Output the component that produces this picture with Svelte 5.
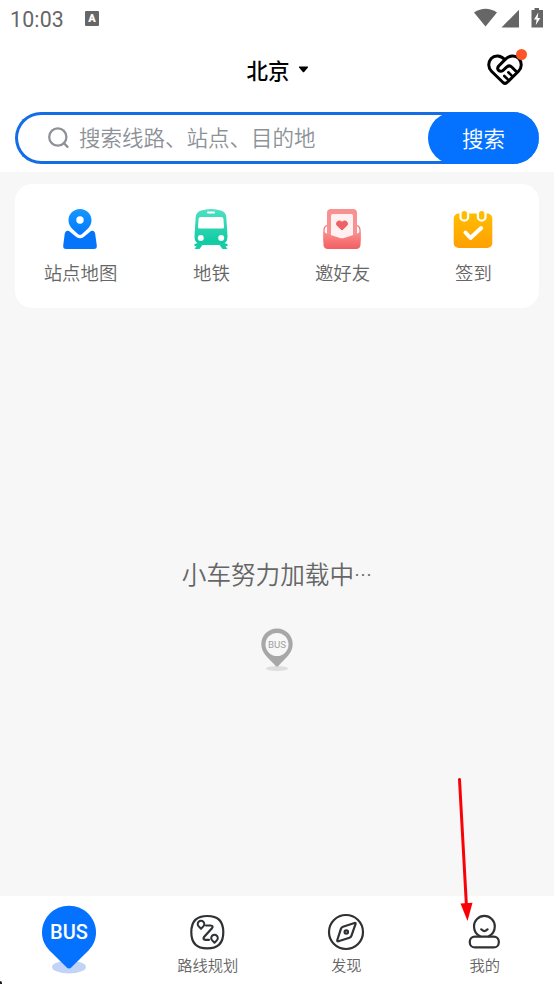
<script lang="ts">
	let city = '北京';
	let query = '';
	let activeTab = 'bus';

	const shortcuts = [
		{ id: 'map', label: '站点地图' },
		{ id: 'metro', label: '地铁' },
		{ id: 'invite', label: '邀好友' },
		{ id: 'checkin', label: '签到' }
	];

	const tabs = [
		{ id: 'bus', label: 'BUS' },
		{ id: 'route', label: '路线规划' },
		{ id: 'discover', label: '发现' },
		{ id: 'mine', label: '我的' }
	];
</script>

<div class="screen">
	<header>
		<div class="status-bar">
			<span class="clock">10:03</span>
			<span class="input-badge">A</span>
			<svg class="status-icons" width="72" height="22" viewBox="0 0 72 22" fill="#666" aria-hidden="true">
				<path d="M1 4.500Q12.500 -3 24 4.500L12.500 18.500Z" />
				<path d="M46 1.700V19.500H28.500Z" />
				<path d="M61.500 0h4.500v2h4v17.500H58.500V2h3Z" />
				<path d="M65.300 4.500l-4.300 7h2.600l-.8 5.500 4.500-7h-2.600Z" fill="#fff" />
			</svg>
		</div>

		<div class="title-bar">
			<button type="button" class="city">
				{city}
				<svg width="11" height="7" viewBox="0 0 11 7" aria-hidden="true">
					<path d="M1.500.5h8q1 0 .4.9L6.200 5.900q-.7.7-1.400 0L1.100 1.400Q.5.500 1.500.5Z" />
				</svg>
			</button>
			<button type="button" class="care" aria-label="关怀">
				<svg width="40" height="40" viewBox="0 0 40 40" fill="none" stroke="#000" stroke-width="3" stroke-linecap="round" stroke-linejoin="round">
					<path d="M20 11.600C15.500 6.800 9.500 7 6.200 10.500C2.800 14.300 3 19.800 6.500 23.300L18.300 34.800Q20 36 21.700 34.800L33.500 23.300C37 19.800 37.200 14.300 33.800 10.500C30.500 7 24.500 6.800 20 11.600L13.700 18C11 21.500 14.700 24.700 18 22.500L21.800 18.900Q24.500 16.700 26.700 19L31.500 23.700" />
					<path d="M23.300 24.300l3.700 3.600M19.300 28l3.500 3.400" stroke-width="2.600" />
				</svg>
				<span class="dot"></span>
			</button>
		</div>

		<form class="search" on:submit|preventDefault>
			<svg width="22" height="22" viewBox="0 0 22 22" fill="none" stroke="#8d9298" stroke-width="2.300" stroke-linecap="round" aria-hidden="true">
				<circle cx="9.800" cy="10" r="8.600" />
				<path d="M16 16.200l3.500 3.700" />
			</svg>
			<input type="text" bind:value={query} placeholder="搜索线路、站点、目的地" aria-label="搜索" />
			<button type="submit">搜索</button>
		</form>
	</header>

	<section class="shortcuts">
		{#each shortcuts as item}
			<button type="button" class="shortcut">
				<svg width="42" height="42" viewBox="0 0 42 42" aria-hidden="true">
					{#if item.id === 'map'}
						<defs>
							<linearGradient id="blue" x2="0" y2="1">
								<stop offset="0" stop-color="#1698ff" />
								<stop offset="1" stop-color="#0078ff" />
							</linearGradient>
						</defs>
						<path d="M10 23Q6.500 22.200 5.700 26L4.200 37.500Q3.800 41 7.200 41H34.800Q38.200 41 37.800 37.500L36.200 26Q35.500 22.200 32 23L25 28.700Q21 32 17 28.700Z" fill="#0475fb" />
						<path d="M21 1C14.500 1 9.500 6 9.500 12.200C9.500 18.500 14.500 22 19 26Q21 27.700 23 26C27.500 22 32.500 18.500 32.500 12.200C32.500 6 27.500 1 21 1Z" fill="url(#blue)" />
						<circle cx="21" cy="12" r="3.700" fill="#fff" />
					{:else if item.id === 'metro'}
						<defs>
							<linearGradient id="green" x2="0" y2="1">
								<stop offset="0" stop-color="#50dfc3" />
								<stop offset="1" stop-color="#0bcba0" />
							</linearGradient>
						</defs>
						<path d="M11 2.500Q21 -.5 31 2.500Q36 4 36.300 9L37.500 28Q37.700 36 31 36H11Q4.300 36 4.500 28L5.700 9Q6 4 11 2.500Z" fill="url(#green)" />
						<path d="M4.500 36l5-1.500 3 2.500-3 4H4.500l2-2.800-2-.2ZM37.500 36l-5-1.500-3 2.500 3 4h5l-2-2.800 2-.2Z" fill="#13cda6" />
						<path d="M12 35.500h18" stroke="#13cda6" stroke-width="3" />
						<rect x="17" y="3.500" width="8" height="1.900" rx=".9" fill="#fff" />
						<path d="M10.500 9h21q1.700 0 1.900 1.800L34 19q.1 1.500-1.500 1.500h-23Q7.900 20.500 8 19l.6-8.200Q8.800 9 10.500 9Z" fill="#fff" />
						<circle cx="10.800" cy="30" r="3" fill="#fff" />
						<circle cx="31.200" cy="30" r="3" fill="#fff" />
					{:else if item.id === 'invite'}
						<defs>
							<linearGradient id="pink" x2="0" y2="1">
								<stop offset="0" stop-color="#fa9290" />
								<stop offset="1" stop-color="#f35e61" />
							</linearGradient>
						</defs>
						<path d="M6 17.500Q3 18.500 3 22V33H39V22Q39 18.500 36 17.500" fill="#fff" stroke="#f3797a" stroke-width="1.200" />
						<path d="M6 31V5Q6 1 10 1H32Q36 1 36 5V31Z" fill="#f8918f" />
						<path d="M10 28V7.500Q10 6 11.500 6H30.500Q32 6 32 7.500V28L21 33Z" fill="#fff0f1" />
						<path d="M21 22l-4.500-4.100c-2.700-2.800.7-7.100 4.500-3.700 3.800-3.400 7.200.9 4.500 3.700Z" fill="#ee6264" stroke="#ee6264" />
						<path d="M2.400 23Q3 24.200 6.500 26L19 30Q21 30.600 23 30L35.500 26Q39 24.200 39.600 23V36Q39.600 41 35 41H7Q2.400 41 2.400 36Z" fill="url(#pink)" />
					{:else}
						<defs>
							<linearGradient id="orange" x2="0" y2="1">
								<stop offset="0" stop-color="#ffbd02" />
								<stop offset="1" stop-color="#ffa002" />
							</linearGradient>
						</defs>
						<rect x="1.700" y="5.500" width="38.600" height="34.500" rx="5" fill="url(#orange)" />
						<g fill="#ffbd02" stroke="#fff" stroke-width="2.200">
							<rect x="8.500" y="2" width="7.600" height="10.700" rx="3.800" />
							<rect x="25.900" y="2" width="7.600" height="10.700" rx="3.800" />
						</g>
						<path d="M13.500 24.500l5 5.500L29.200 20" fill="none" stroke="#fff" stroke-width="4" stroke-linecap="round" stroke-linejoin="round" />
					{/if}
				</svg>
				<span>{item.label}</span>
			</button>
		{/each}
	</section>

	<main>
		<p>小车努力加载中<span class="ellipsis">···</span></p>
		<svg width="34" height="44" viewBox="0 0 34 44" aria-hidden="true">
			<ellipse cx="17" cy="40.500" rx="11" ry="2.600" fill="#dedede" />
			<path d="M17 .5C8.200.5 1.300 7.400 1.300 16C1.300 24.500 7 29 15.500 37.700Q17 39.500 18.500 37.700C27 29 32.700 24.500 32.700 16C32.700 7.400 25.800.5 17 .5Z" fill="#a7a7a7" />
			<circle cx="17" cy="16.500" r="11.500" fill="#f7f7f7" />
			<text x="17" y="19.800" text-anchor="middle" font-size="9.700" fill="#a0a0a0">BUS</text>
		</svg>
	</main>

	<nav>
		{#each tabs as tab}
			<button type="button" class="tab" class:active={activeTab === tab.id} on:click={() => (activeTab = tab.id)}>
				{#if tab.id === 'bus'}
					<svg width="58" height="70" viewBox="0 0 58 70" aria-hidden="true">
						<ellipse cx="29" cy="62" rx="17" ry="6.500" fill="#c1d3f7" />
						<path d="M29 .8C14 .8 2 12.800 2 27.500C2 35 5 40.500 9.500 45.500L26.500 62.300Q29 64.700 31.500 62.300L48.500 45.500C53 40.500 56 35 56 27.500C56 12.800 44 .8 29 .8Z" fill="#0572ff" />
						<text x="29" y="34.200" text-anchor="middle" font-size="20" font-weight="500" fill="#fff">{tab.label}</text>
					</svg>
				{:else}
					<svg width="38" height="38" viewBox="0 0 38 38" fill="none" stroke="#303133" stroke-width="2.200" stroke-linecap="round" stroke-linejoin="round" aria-hidden="true">
						{#if tab.id === 'route'}
							<path d="M18.300 3C7.500 3 2.300 8 2.300 19.200S7.500 35.400 18.300 35.400S34.300 30.400 34.300 19.200S29 3 18.300 3Z" />
							<path d="M12 15.800L9.700 13.400A3.300 3.300 0 1 1 14.300 13.400ZM25.500 29.800L23.200 27.400A3.300 3.300 0 1 1 27.800 27.400Z" stroke-width="2" />
							<path d="M17 12.500h4.500q3.200.2 1.500 2.700L15 24q-1.500 2.700 1.500 2.800h3.500" />
						{:else if tab.id === 'discover'}
							<circle cx="19" cy="19" r="17" />
							<path d="M27.500 10L16 13.700Q14.500 14.200 14 15.600L10.300 27Q9.800 28.600 11.400 28.200L22.500 24.700Q24 24.200 24.500 22.700L28.500 11.200Q29 9.500 27.500 10Z" />
							<circle cx="19.300" cy="19" r="1.700" />
						{:else}
							<path d="M14 23.300C10.200 21.300 8 17.500 8 13.300A10.400 10.400 0 0 1 28.800 13.300C28.800 17.500 26.600 21.300 22.800 23.300" />
							<rect x="3.800" y="23.600" width="29" height="10.800" rx="5" />
							<path d="M15.200 16.300q3.200 3.500 6.400 0" />
						{/if}
					</svg>
					<span>{tab.label}</span>
				{/if}
			</button>
		{/each}
	</nav>

	<!-- pointer towards the profile tab -->
	<svg class="pointer" width="18" height="146" viewBox="0 0 18 146" aria-hidden="true">
		<path d="M4.500 2.500L11.500 130" stroke="#f80207" stroke-width="3" stroke-linecap="round" />
		<path d="M5.500 126.500L17.500 125.800L12.500 144Z" fill="#f80207" />
	</svg>
	<span class="corner"></span>
</div>

<style>
	:global(body) {
		margin: 0;
	}

	.screen {
		position: relative;
		display: flex;
		flex-direction: column;
		width: 554px;
		height: 984px;
		overflow: hidden;
		background: #f7f7f7;
		font-family: Roboto, 'Noto Sans CJK SC', sans-serif;
	}

	button {
		padding: 0;
		border: none;
		background: transparent;
		font-family: inherit;
		cursor: pointer;
	}

	svg {
		display: block;
		flex-shrink: 0;
	}

	header {
		height: 172px;
		background: #fff;
	}

	.status-bar {
		display: flex;
		align-items: center;
		height: 38px;
		padding: 0 9px 0 10px;
		box-sizing: border-box;
	}

	.clock {
		width: 75px;
		color: #666;
		font-size: 21.3px;
		letter-spacing: 0.2px;
	}

	.input-badge {
		width: 14px;
		height: 15px;
		margin-top: -1px;
		border-radius: 1px;
		background: #666;
		color: #fff;
		font-size: 11px;
		font-weight: 900;
		line-height: 15px;
		text-align: center;
	}

	.status-icons {
		margin-left: auto;
	}

	.title-bar {
		position: relative;
		display: flex;
		justify-content: center;
		height: 74px;
	}

	.city {
		display: flex;
		align-items: center;
		gap: 8px;
		height: 63px;
		padding-left: 1px;
		color: #000;
		font-size: 21.5px;
		font-weight: 500;
	}

	.care {
		position: absolute;
		top: 10px;
		right: 29px;
	}

	.dot {
		position: absolute;
		top: 1px;
		right: -2px;
		width: 11px;
		height: 11px;
		border-radius: 50%;
		background: #fc5527;
	}

	.search {
		display: flex;
		align-items: center;
		height: 52px;
		margin: 0 15px;
		padding-left: 30px;
		box-sizing: border-box;
		border: 3px solid #126de7;
		border-right: none;
		border-radius: 27px;
	}

	.search input {
		flex: 1;
		min-width: 0;
		padding: 1px 0 0 9px;
		border: none;
		outline: none;
		background: transparent;
		font-family: inherit;
		font-size: 21.5px;
		font-weight: 350;
	}

	.search input::placeholder {
		color: #8d9298;
		opacity: 1;
	}

	.search button {
		width: 111px;
		height: 52px;
		margin: -3px 0;
		padding-bottom: 2px;
		border-radius: 27px;
		background: #0572ff;
		color: #fff;
		font-size: 21.5px;
		font-weight: 350;
	}

	.shortcuts {
		display: flex;
		height: 124px;
		margin: 12px 15px 0;
		border-radius: 17px;
		background: #fff;
	}

	.shortcut {
		flex: 1;
		display: flex;
		flex-direction: column;
		align-items: center;
		gap: 10px;
		padding-top: 24px;
		color: #666;
		font-size: 18.4px;
		font-weight: 350;
		line-height: 27px;
	}

	.shortcut svg {
		margin-left: -1px;
	}

	main {
		flex: 1;
		display: flex;
		flex-direction: column;
		align-items: center;
		padding-top: 250px;
	}

	main p {
		margin: 0 0 34px;
		color: #666;
		font-size: 24.6px;
		font-weight: 350;
		line-height: 36px;
	}

	.ellipsis {
		font-family: Roboto, sans-serif;
	}

	nav {
		display: flex;
		height: 88px;
		background: #fff;
	}

	.tab {
		flex: 1;
		display: flex;
		flex-direction: column;
		align-items: center;
		padding-top: 17px;
		color: #666;
		font-size: 15.3px;
		font-weight: 350;
		line-height: 31px;
	}

	.tab:first-child {
		padding-top: 9px;
	}

	.pointer {
		position: absolute;
		left: 455px;
		top: 777px;
	}

	.corner {
		position: absolute;
		left: 0;
		bottom: 0;
		width: 2px;
		height: 3px;
		border-top-right-radius: 2px;
		background: #0b1f33;
	}
</style>
